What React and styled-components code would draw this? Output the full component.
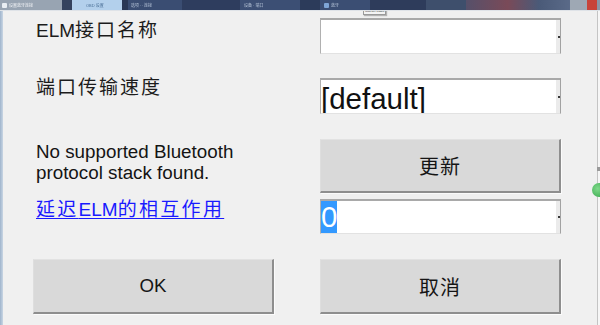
import React from "react";
import styled, { createGlobalStyle } from "styled-components";

const Global = createGlobalStyle`
  html, body { margin: 0; padding: 0; background: #f0f0f0; }
  body { font-family: "Liberation Sans", "Noto Sans CJK SC", sans-serif; }
  * { box-sizing: border-box; }
`;

const Window = styled.div`
  width: 600px;
  height: 325px;
  display: flex;
  flex-direction: column;
  overflow: hidden;
  background: #f0f0f0;
`;

const TaskStrip = styled.div`
  height: 10px;
  display: flex;
  flex: none;
  background: #2c3b58;
`;

const Seg = styled.div`
  width: ${(p) => p.$w}px;
  flex: ${(p) => (p.$grow ? 1 : "none")};
  background: ${(p) => p.$bg};
  display: flex;
  align-items: center;
  gap: 2px;
  padding-left: ${(p) => p.$pl || 0}px;
  font-size: 4px;
  line-height: 5px;
  color: ${(p) => p.$fg || "#e8eef6"};
  white-space: nowrap;
  overflow: hidden;
  filter: blur(0.3px);
`;

const TinyIcon = styled.span`
  width: 5px;
  height: 5px;
  border-radius: 1px;
  background: ${(p) => p.$c || "#dfe6ee"};
  flex: none;
`;

const Body = styled.div`
  flex: 1;
  display: flex;
  position: relative;
  overflow: hidden;
  border-top: 1px solid #dfe3e8;
`;

const FrameLeft = styled.div`
  width: 3px;
  flex: none;
  background: linear-gradient(90deg, #9fb4cc, #c9d6e4);
`;

const FrameRight = styled.div`
  width: 3px;
  flex: none;
  border-left: 1px solid #c4c4c4;
  background: #f6f6f6;
`;

const Content = styled.div`
  flex: 1;
  display: flex;
  flex-direction: column;
  padding-left: 30px;
`;

const Row = styled.div`
  display: grid;
  grid-template-columns: 241px 241px;
  column-gap: 46px;
  height: ${(p) => p.$h}px;
  margin-top: ${(p) => p.$top}px;
  flex: none;
`;

const Label = styled.div`
  align-self: start;
  margin-top: ${(p) => p.$mt || 0}px;
  padding-left: 3px;
  font-size: 19px;
  line-height: 22px;
  color: #1c1c1c;
  white-space: nowrap;
`;

const Han = styled.span`
  letter-spacing: ${(p) => p.$ls ?? 2}px;
`;

const Message = styled.div`
  align-self: start;
  margin-top: 2px;
  padding-left: 3px;
  font-size: 18.8px;
  line-height: 21px;
  color: #141414;
`;

const Link = styled.a`
  align-self: start;
  padding-left: 3px;
  font-size: 19px;
  line-height: 22px;
  color: #1a1aff;
  text-decoration: underline;
  text-underline-offset: 2px;
  white-space: nowrap;
  cursor: pointer;
`;

const Field = styled.div`
  grid-column: 2;
  display: flex;
  background: #ffffff;
  border-top: 2px solid #a9a9a9;
  border-left: 1px solid #b0b0b0;
  border-right: 1px solid #a2a2a2;
  border-bottom: 1px solid #e2e2e2;
  overflow: hidden;
`;

const FieldText = styled.div`
  flex: 1;
  font-size: 29.5px;
  line-height: ${(p) => p.$lh}px;
  padding-top: ${(p) => p.$pt || 0}px;
  padding-left: ${(p) => p.$pl || 0}px;
  color: #111;
  white-space: nowrap;
`;

const Selected = styled.span`
  display: inline-block;
  background: #3399ff;
  color: #ffffff;
  height: 100%;
`;

const Gutter = styled.div`
  width: 4px;
  flex: none;
  background: #ebebeb;
  display: flex;
  align-items: center;
  justify-content: flex-end;
  &::after {
    content: "";
    width: 2px;
    height: 2px;
    background: #3a3a3a;
  }
`;

const Button = styled.button`
  grid-column: ${(p) => p.$col};
  display: flex;
  align-items: center;
  justify-content: center;
  background: #d9d9d9;
  border: none;
  border-top: 1px solid #e2e2e2;
  border-left: 1px solid #dedede;
  border-right: 2px solid #8e8e8e;
  border-bottom: 2px solid #8e8e8e;
  box-shadow: 1px 1px 0 #fbfbfb;
  font-family: "Liberation Sans", "Noto Sans CJK SC", sans-serif;
  font-size: ${(p) => p.$fs || 18.7}px;
  color: #151515;
  padding: 0;
  margin: 0;
  cursor: pointer;
`;

const Tooltip = styled.div`
  position: absolute;
  left: 363px;
  top: -4px;
  width: 23px;
  height: 8px;
  background: #f4f4f4;
  border: 1px solid #9a9a9a;
  font-size: 3.6px;
  line-height: 6px;
  text-align: center;
  color: #333;
  white-space: nowrap;
  box-shadow: 1px 1px 1px rgba(0, 0, 0, 0.25);
`;

const GreenDot = styled.div`
  position: absolute;
  left: 592px;
  top: 172px;
  width: 14px;
  height: 14px;
  border-radius: 50%;
  background: radial-gradient(circle at 40% 40%, #7fd98a, #34a64a);
`;

const Tick = styled.div`
  position: absolute;
  left: 597px;
  top: 156px;
  width: 3px;
  height: 4px;
  background: #9a9a9a;
`;

export default function App() {
  return (
    <>
      <Global />
      <Window>
        <TaskStrip>
          <Seg $w={62} $bg="#98a4b2" $pl={2} $fg="#f2f4f7">
            <TinyIcon $c="#e9eef3" />
            设置蓝牙连接
          </Seg>
          <Seg $w={10} $bg="#34425e" />
          <Seg $w={50} $bg="#b3d0ec" $pl={14} $fg="#4a6f96">
            OBD 设置
          </Seg>
          <Seg $w={6} $bg="#2a3856" />
          <Seg $w={54} $bg="#3a4d72" $pl={3} $fg="#b6c4d8">
            选项 ·· 连接
          </Seg>
          <Seg $w={58} $bg="#2e3d5e" />
          <Seg $w={60} $bg="#3c4f74" $pl={4} $fg="#b6c4d8">
            设备 · 端口
          </Seg>
          <Seg $w={20} $bg="#2c3b5a" />
          <Seg $w={50} $bg="#3b4e73" $pl={4} $fg="#b6c4d8">
            <TinyIcon $c="#7fa6d6" />
            蓝牙
          </Seg>
          <Seg $w={56} $bg="#2e3c5b" />
          <Seg $w={40} $bg="#3e4f6c" />
          <Seg $grow $bg="linear-gradient(90deg, #56506a, #7a4a58 40%, #4a5a78 70%, #5a6a88)" />
          <Seg $w={17} $bg="#9ea8b4" />
          <Seg $w={10} $bg="#c8443a" />
          <Seg $w={3} $bg="#8a96a6" />
        </TaskStrip>
        <Body>
          <FrameLeft />
          <Content>
            <Row $top={7} $h={36}>
              <Label $mt={2}>
                ELM<Han>接口名称</Han>
              </Label>
              <Field>
                <FieldText $lh={33} />
                <Gutter />
              </Field>
            </Row>
            <Row $top={24} $h={36}>
              <Label $mt={-1}>
                <Han>端口传输速度</Han>
              </Label>
              <Field>
                <FieldText $lh={33} $pt={2}>
                  [default]
                </FieldText>
                <Gutter />
              </Field>
            </Row>
            <Row $top={25} $h={54}>
              <Message>
                No supported Bluetooth
                <br />
                protocol stack found.
              </Message>
              <Button $col={2} $fs={20}>
                <Han $ls={1}>更新</Han>
              </Button>
            </Row>
            <Row $top={6} $h={35}>
              <Link>
                <Han $ls={2.3}>延迟</Han>ELM<Han $ls={2.3}>的相互作用</Han>
              </Link>
              <Field>
                <FieldText $lh={32}>
                  <Selected>0</Selected>
                </FieldText>
                <Gutter />
              </Field>
            </Row>
            <Row $top={25} $h={55}>
              <Button $col={1}>OK</Button>
              <Button $col={2} $fs={20}>
                <Han $ls={1}>取消</Han>
              </Button>
            </Row>
          </Content>
          <FrameRight />
          <Tooltip>Silicon Labs</Tooltip>
          <Tick />
          <GreenDot />
        </Body>
      </Window>
    </>
  );
}
